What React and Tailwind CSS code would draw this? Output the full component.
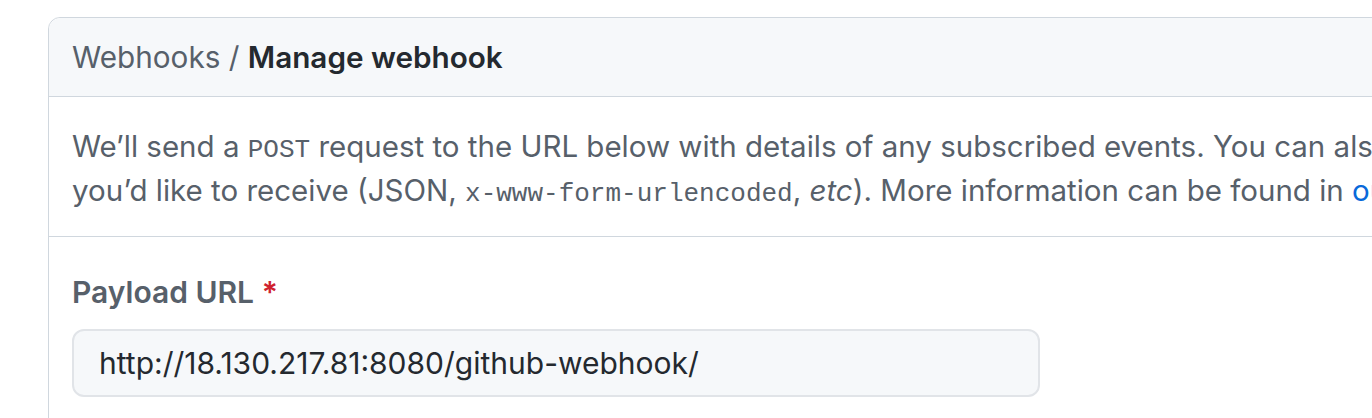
export default function App() {
  return (
    <div
      className="h-[418px] w-[1372px] overflow-hidden bg-white pl-12 pt-[17px]"
      style={{ fontFamily: "Inter, 'Noto Sans', sans-serif" }}
    >
      <div className="w-[1500px] rounded-tl-[12px] border border-[#d0d7de] bg-white">
        {/* Header */}
        <div className="flex h-[79px] items-center rounded-tl-[12px] border-b border-[#d0d7de] bg-[#f6f8fa] px-[23px]">
          <h2 className="text-[29.7px] text-[#57606a]">
            Webhooks / <span className="font-semibold text-[#24292f]">Manage webhook</span>
          </h2>
        </div>

        {/* Description */}
        <div className="border-b border-[#d0d7de] px-[23px] pt-[27px] pb-[24px] text-[29.5px] leading-[44px] text-[#57606a]">
          <p className="h-[44px] whitespace-nowrap">
            We’ll send a <code className="font-['Liberation_Mono',monospace] text-[26px] leading-none">POST</code>{" "}
            request to the URL below with details of any subscribed events. You can also specify which data format
          </p>
          <p className="h-[44px] whitespace-nowrap">
            you’d like to receive (JSON,{" "}
            <code className="font-['Liberation_Mono',monospace] text-[26px] leading-none">x-www-form-urlencoded</code>,{" "}
            <em>etc</em>). More information can be found in{" "}
            <a className="text-[#0969da]">our developer documentation</a>.
          </p>
        </div>

        {/* Payload URL */}
        <div className="px-[23px] pt-[34px] pb-6">
          <label className="block text-[30px] leading-[42px] font-semibold text-[#57606a]">
            Payload URL <span className="text-[#cf222e]">*</span>
          </label>
          <div className="mt-[16px] flex h-[68px] w-[968px] items-center rounded-[12px] border-2 border-[#e1e4e8] bg-[#f6f8fa] px-[25px] text-[30px] text-[#24292f]">
            http://18.130.217.81:8080/github-webhook/
          </div>
        </div>
      </div>
    </div>
  );
}
